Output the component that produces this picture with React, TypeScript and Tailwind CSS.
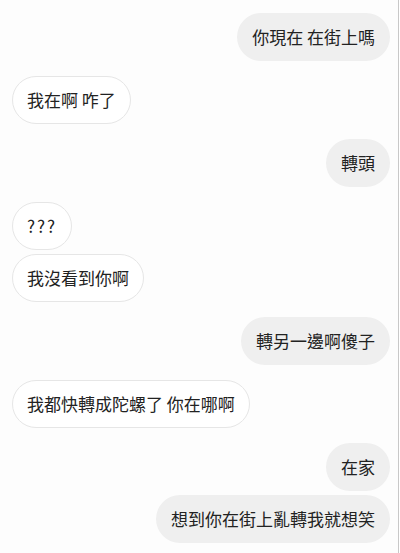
const messages: { text: string; mine: boolean }[] = [
  { text: '你現在 在街上嗎', mine: true },
  { text: '我在啊 咋了', mine: false },
  { text: '轉頭', mine: true },
  { text: '???', mine: false },
  { text: '我沒看到你啊', mine: false },
  { text: '轉另一邊啊傻子', mine: true },
  { text: '我都快轉成陀螺了 你在哪啊', mine: false },
  { text: '在家', mine: true },
  { text: '想到你在街上亂轉我就想笑', mine: true },
];

export default function App() {
  return (
    <div className="h-[553px] w-[400px] bg-white overflow-hidden">
      <div
        className="h-full w-[399px] border-r border-[#c8c8c8] bg-[#fdfdfd] pl-3 pr-2 pt-[13px]"
        style={{ fontFamily: '"Noto Sans CJK TC", "Noto Sans CJK SC", "Noto Sans", sans-serif' }}
      >
        {messages.map((m, i) => {
          const prev = messages[i - 1];
          const sameGroup = prev && prev.mine === m.mine;
          return (
            <div
              key={i}
              className={`flex ${m.mine ? 'justify-end' : 'justify-start'} ${i === 0 ? '' : sameGroup ? 'mt-1' : 'mt-[15px]'}`}
            >
              <div
                className={
                  m.mine
                    ? 'h-12 flex items-center px-[15px] rounded-full bg-[#efefef] text-[17px] text-[#222222]'
                    : 'h-12 flex items-center px-[14px] rounded-full bg-white border border-[#e6e6e6] text-[17px] text-[#222222]'
                }
              >
                <span className={m.text === '???' ? 'tracking-[2px]' : ''}>{m.text}</span>
              </div>
            </div>
          );
        })}
      </div>
    </div>
  );
}
